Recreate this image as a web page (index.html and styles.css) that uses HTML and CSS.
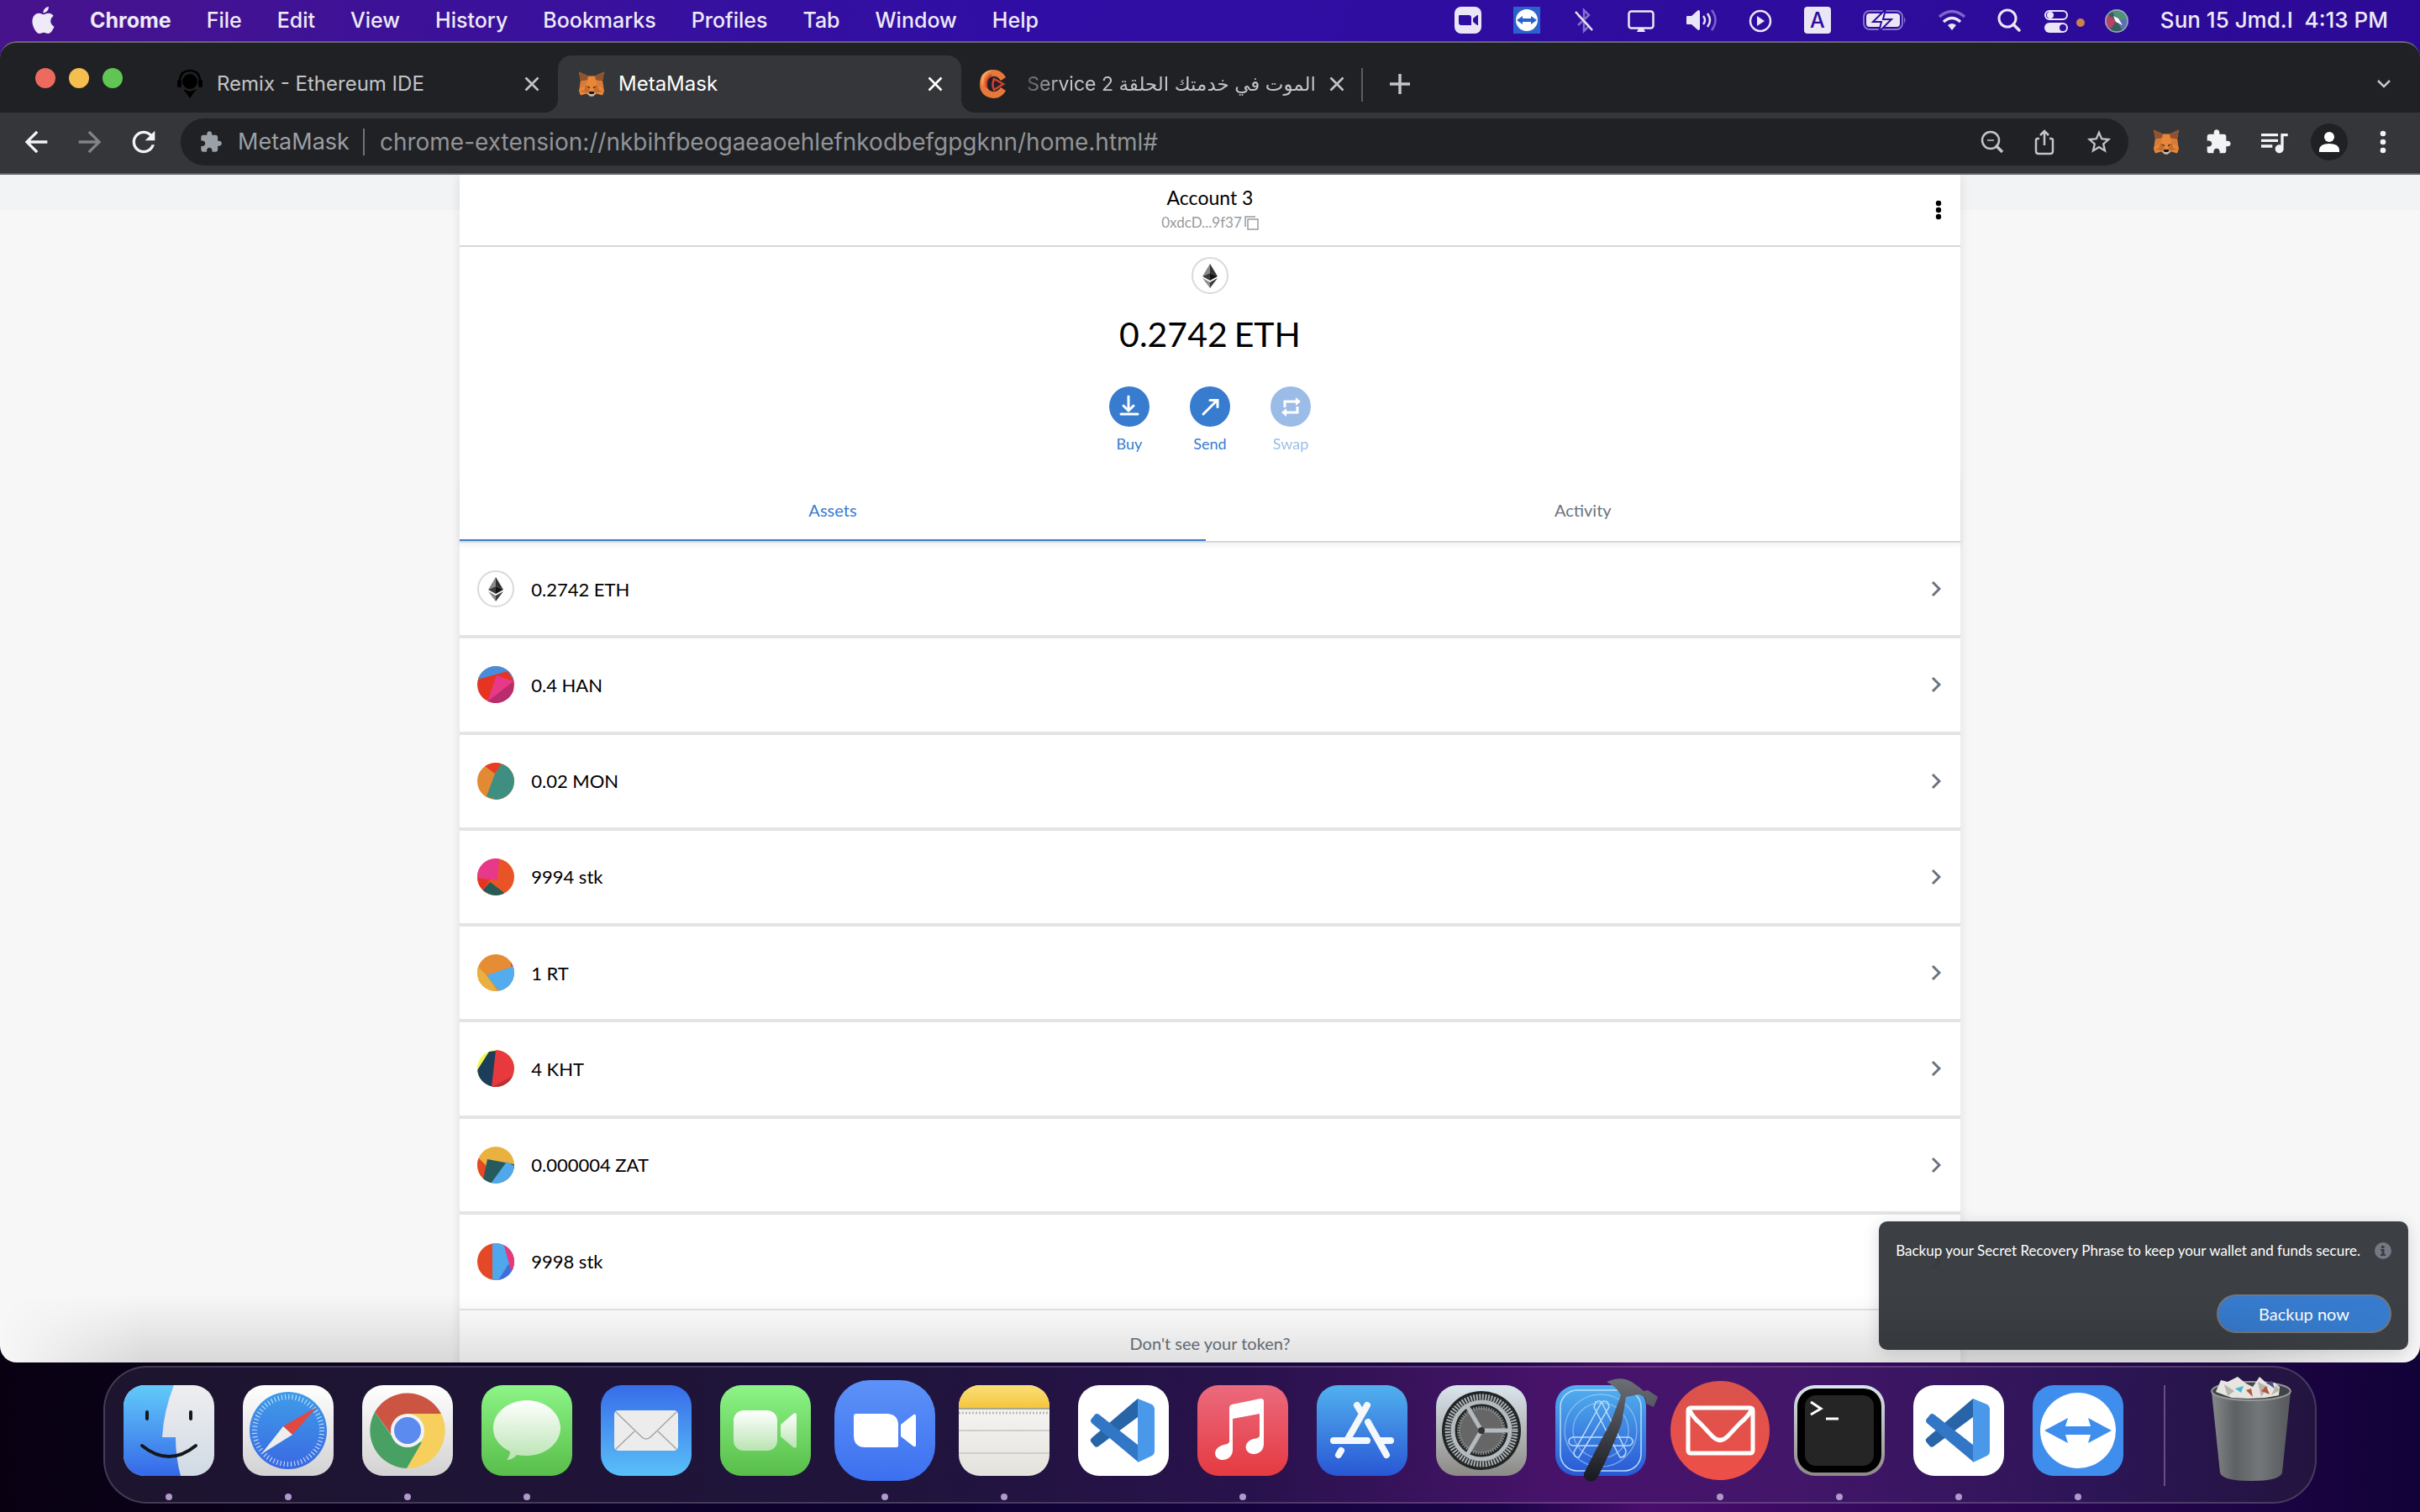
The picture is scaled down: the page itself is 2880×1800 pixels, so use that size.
FILE: index.html
```html
<!DOCTYPE html>
<html lang="en">
<head>
<meta charset="utf-8">
<title>MetaMask</title>
<link rel="stylesheet" href="styles.css">
</head>
<body>
<svg class="defs" aria-hidden="true">
  <defs>
    <symbol id="fox" viewBox="0 0 32 31">
      <path fill="#e8873a" d="M1 1 12 6h8L31 1l-2 11 2 12-2 5-7-2-4 3h-4l-4-3-7 2-2-5 2-12z"/>
      <path fill="#8f5330" d="M1 1 12 6 11 11 3 12zM31 1 20 6l1 5 8 1z"/>
      <path fill="#d97a35" d="M3 12l8-1-2 6-7 4zM29 12l-8-1 2 6 7 4z"/>
      <path fill="#c96d2f" d="M9 17l3 1 2 8-4 0-8-2 5-1zM23 17l-3 1-2 8 4 0 8-2-5-1z"/>
      <path fill="#e8873a" d="M12 13h8l-2 10h-4z"/>
      <path fill="#3a2c26" d="M10 18l4 1v2zM22 18l-4 1v2z"/>
      <path fill="#cdbeb0" d="M11 26l3-1h4l3 1-3 4h-4z"/>
      <path fill="#151515" d="M13.500 24.500h5l1 2-2 1h-3l-2-1z"/>
    </symbol>
    <symbol id="puzzle" viewBox="0 0 24 24"><path fill="currentColor" d="M20.500 11H19V7c0-1.100-.9-2-2-2h-4V3.500C13 2.120 11.880 1 10.500 1S8 2.120 8 3.500V5H4c-1.100 0-1.990.9-1.990 2v3.800H3.500c1.490 0 2.700 1.210 2.700 2.700s-1.210 2.700-2.700 2.700H2V20c0 1.100.9 2 2 2h3.800v-1.500c0-1.490 1.210-2.700 2.700-2.700 1.490 0 2.700 1.210 2.700 2.700V22H17c1.100 0 2-.9 2-2v-4h1.500c1.380 0 2.500-1.120 2.500-2.500S21.880 11 20.500 11z"/></symbol>
    <symbol id="close" viewBox="0 0 18 18"><path d="M1.500 1.500l15 15M16.500 1.500l-15 15" stroke="currentColor" stroke-width="2.600" fill="none"/></symbol>
    <symbol id="chevron" viewBox="0 0 12 20"><path d="M2 2l8 8-8 8" stroke="currentColor" stroke-width="3" fill="none"/></symbol>
    <symbol id="eth" viewBox="0 0 44 44">
      <circle cx="22" cy="22" r="21" fill="#fff" stroke="#d9d9dc" stroke-width="2"/>
      <path fill="#8a8a8a" d="M22 8v11l-9 4z"/><path fill="#343434" d="M22 8l9 15-9-4z"/>
      <path fill="#3c3c3b" d="M13 23l9-4v9z"/><path fill="#141414" d="M31 23l-9-4v9z"/>
      <path fill="#8a8a8a" d="M13 25l9 5v7z"/><path fill="#3c3c3b" d="M31 25l-9 5v7z"/>
    </symbol>
    <symbol id="vscode" viewBox="0 0 108 108">
      <rect width="108" height="108" rx="25" fill="#fff"/>
      <path fill="#2765a8" d="M71 16v22L24 73q-3 2-5-1l-4-5q-1-2 1-4z"/>
      <path fill="#3277c6" d="M16 45q-2-3 0-5l4-5q2-2 5 0l46 36v20z"/>
      <path fill="#4a98ea" d="M71 16l17 7q3 2 3 5v51q0 3-3 5l-17 8z"/>
    </symbol>
    <clipPath id="token"><circle cx="22" cy="22" r="22"/></clipPath>
    <linearGradient id="finderBlue" x2="0" y2="1"><stop stop-color="#62cbfa"/><stop offset="1" stop-color="#3568e8"/></linearGradient>
    <linearGradient id="finderGrey" x2="0" y2="1"><stop stop-color="#efeef0"/><stop offset="1" stop-color="#d0dae4"/></linearGradient>
    <linearGradient id="paper" x2="0" y2="1"><stop stop-color="#fff"/><stop offset="1" stop-color="#d2d2d2"/></linearGradient>
    <linearGradient id="safari" x2="0" y2="1"><stop stop-color="#3f9de9"/><stop offset="1" stop-color="#3a68e2"/></linearGradient>
    <linearGradient id="green" x2="0" y2="1"><stop stop-color="#8cf587"/><stop offset="1" stop-color="#58bd49"/></linearGradient>
    <linearGradient id="bubble" x2="0" y2="1"><stop stop-color="#fff"/><stop offset="1" stop-color="#b9e4b2"/></linearGradient>
    <linearGradient id="mail" x2="0" y2="1"><stop stop-color="#376ce9"/><stop offset="1" stop-color="#5ac0f8"/></linearGradient>
    <linearGradient id="zoomBlue" x2="0" y2="1"><stop stop-color="#5c92f8"/><stop offset="1" stop-color="#3d70f0"/></linearGradient>
    <linearGradient id="noteTop" x2="0" y2="1"><stop stop-color="#fae078"/><stop offset="1" stop-color="#f5c43c"/></linearGradient>
    <linearGradient id="noteBody" x2="0" y2="1"><stop stop-color="#fbfafa"/><stop offset="1" stop-color="#e3e2db"/></linearGradient>
    <linearGradient id="music" x2="0" y2="1"><stop stop-color="#eb6a7e"/><stop offset="1" stop-color="#e53a40"/></linearGradient>
    <linearGradient id="store" x2="0" y2="1"><stop stop-color="#51b1ee"/><stop offset="1" stop-color="#2957d5"/></linearGradient>
    <linearGradient id="gear" x2="0" y2="1"><stop stop-color="#dbe5ed"/><stop offset="1" stop-color="#8c8985"/></linearGradient>
    <linearGradient id="hammer" x2="0" y2="1"><stop stop-color="#6c6f76"/><stop offset="1" stop-color="#17191f"/></linearGradient>
    <linearGradient id="bin"><stop stop-color="#86898a"/><stop offset=".3" stop-color="#5e6163"/><stop offset=".6" stop-color="#73777a"/><stop offset="1" stop-color="#56585b"/></linearGradient>
    <linearGradient id="red" x2="0" y2="1"><stop stop-color="#d9534c"/><stop offset="1" stop-color="#ee4f48"/></linearGradient>
    <clipPath id="tile"><rect width="108" height="108" rx="25"/></clipPath>
    <clipPath id="orb"><circle cx="14" cy="17" r="14"/></clipPath>
  </defs>
</svg>

<header class="menubar">
  <nav class="menus" aria-label="Application menu">
    <button class="menu apple" aria-label="Apple"><svg width="27" height="32" viewBox="2 0 20 24"><path fill="currentColor" d="M12.152 6.896c-.948 0-2.415-1.078-3.960-1.040-2.040.027-3.910 1.183-4.961 3.014-2.117 3.675-.546 9.103 1.519 12.090 1.013 1.454 2.208 3.090 3.792 3.039 1.520-.065 2.090-.987 3.935-.987 1.831 0 2.350.987 3.960.948 1.637-.026 2.676-1.480 3.676-2.948 1.156-1.688 1.636-3.325 1.662-3.415-.039-.013-3.182-1.221-3.220-4.857-.026-3.040 2.480-4.494 2.597-4.559-1.429-2.090-3.623-2.324-4.390-2.376-2-.156-3.675 1.090-4.610 1.090zM15.530 3.830c.843-1.012 1.400-2.427 1.245-3.830-1.207.052-2.662.805-3.532 1.818-.78.896-1.454 2.338-1.273 3.714 1.338.104 2.715-.688 3.559-1.701"/></svg></button>
    <button class="menu app">Chrome</button>
    <button class="menu">File</button>
    <button class="menu">Edit</button>
    <button class="menu">View</button>
    <button class="menu">History</button>
    <button class="menu">Bookmarks</button>
    <button class="menu">Profiles</button>
    <button class="menu">Tab</button>
    <button class="menu">Window</button>
    <button class="menu">Help</button>
  </nav>
  <div class="status">
    <svg width="32" height="32" viewBox="0 0 32 32"><rect width="32" height="32" rx="8" fill="#eae6f5"/><path fill="#2f0ca2" d="M5 11q0-1 1-1h11q3 0 3 3v9H8q-3 0-3-3zM22 14l5-4h1v12h-1l-5-4z"/></svg>
    <svg width="32" height="32" viewBox="0 0 32 32"><rect width="32" height="32" fill="#2c62cf"/><circle cx="16" cy="16" r="13" fill="#fff"/><path fill="#2c62cf" d="M4 16l7-5v3h10v-3l7 5-7 5v-3H11v3z"/></svg>
    <svg width="28" height="32" viewBox="0 0 28 32"><path d="M7 22l13-12-6-6v25l6-6L7 10" fill="none" stroke="#8370cc" stroke-width="2.500"/><path d="M4 6l20 22" stroke="#eae6f5" stroke-width="2.500"/></svg>
    <svg width="32" height="32" viewBox="0 0 32 32"><rect x="1.500" y="5.500" width="29" height="20" rx="3" fill="none" stroke="#eae6f5" stroke-width="2.500"/><path fill="#eae6f5" d="M13 26h6l2 4H11z"/></svg>
    <svg width="36" height="32" viewBox="0 0 36 32"><path fill="#eae6f5" d="M0 12q0-1 1-1h5l8-7q2 0 2 2v20q0 2-2 2l-8-7H1q-1 0-1-1z"/><g fill="none" stroke-width="2.500"><path stroke="#eae6f5" d="M20 11q4 5 0 10M25 8q6 8 0 16"/><path stroke="#7a66c8" d="M30 4q9 12 0 24"/></g></svg>
    <svg width="28" height="32" viewBox="0 0 28 32"><circle cx="14" cy="17" r="12" fill="none" stroke="#eae6f5" stroke-width="2.500"/><path fill="#eae6f5" d="M10 11l9 6-9 6z"/></svg>
    <span class="input-source">A</span>
    <svg width="52" height="32" viewBox="0 0 52 32"><rect x="1" y="5" width="46" height="22" rx="7" fill="none" stroke="#8370cc" stroke-width="2"/><rect x="4" y="8" width="40" height="16" rx="4" fill="#eae6f5"/><path fill="#8370cc" d="M49 12q3 4 0 8z"/><path fill="#eae6f5" stroke="#2f0ca2" stroke-width="2" d="M27 3L12 18h10l-3 12 15-15H24z"/></svg>
    <svg width="32" height="32" viewBox="0 0 32 32"><g fill="none" stroke-width="3.500"><path stroke="#7a66c8" d="M1 12q15-13 30 0"/><path stroke="#eae6f5" d="M6 18q10-9 20 0"/></g><path fill="#eae6f5" d="M11 22q5-4 10 0l-5 6z"/></svg>
    <svg width="28" height="32" viewBox="0 0 28 32"><circle cx="12" cy="14" r="10" fill="none" stroke="#eae6f5" stroke-width="3"/><path d="M19 21l7 7" stroke="#eae6f5" stroke-width="3.500" stroke-linecap="round"/></svg>
    <svg class="toggles" width="48" height="32" viewBox="0 0 48 32"><rect x="1" y="5" width="26" height="10" rx="5" fill="none" stroke="#eae6f5" stroke-width="2"/><circle cx="7" cy="10" r="4" fill="#eae6f5"/><rect y="19" width="28" height="12" rx="6" fill="#eae6f5"/><circle cx="22" cy="25" r="4" fill="#2f0ca2"/><circle cx="43" cy="19" r="5" fill="#c98447"/></svg>
    <svg width="28" height="32" viewBox="0 0 28 32"><g clip-path="url(#orb)"><path fill="#35605f" d="M0 3h28v28H0z"/><path fill="#4f8f7b" d="M8 3h20v12L14 17z"/><path fill="#b7436a" d="M0 8l14 8-7 10-7-4z"/><path fill="#5b6fb5" d="M14 17l14-3v8l-8 5z"/></g><circle cx="14" cy="17" r="13" fill="none" stroke="#9aa8b8" stroke-width="1.500"/><path fill="#fff" d="M10 11l6 3 5 8-8-4z"/></svg>
    <time class="clock">Sun 15 Jmd.I  4:13 PM</time>
  </div>
</header>

<main class="window">
  <div class="tabstrip">
    <div class="lights"><i class="light red"></i><i class="light amber"></i><i class="light green"></i></div>
    <div class="tab first">
      <svg width="32" height="36" viewBox="0 0 32 36"><path fill="none" stroke="#000" stroke-width="2.500" d="M4 18V12q2-10 12-10t12 10v6"/><circle cx="16" cy="15" r="9"/><rect x="1" y="13" width="5" height="9" rx="2"/><rect x="26" y="13" width="5" height="9" rx="2"/><path d="M8 24l8 3 8-3-8 11z"/></svg>
      <span class="title">Remix - Ethereum IDE</span>
      <button class="close" aria-label="Close tab"><svg width="18" height="18"><use href="#close"/></svg></button>
    </div>
    <div class="tab active">
      <svg width="32" height="32"><use href="#fox"/></svg>
      <span class="title">MetaMask</span>
      <button class="close" aria-label="Close tab"><svg width="18" height="18"><use href="#close"/></svg></button>
    </div>
    <div class="tab last">
      <svg width="32" height="34" viewBox="0 0 32 34"><path fill="#e8773a" d="M31 9Q26 0 16 0 0 2 0 17t16 17q10 0 15-9l-6-4q-4 6-10 5-7-2-7-9t7-9q6-1 10 5z"/><path fill="#f2a55c" d="M16 0Q3 5 4 20 0 13 3 6 8 0 16 0z"/><path fill="none" stroke="#d83f32" stroke-width="2.500" d="M17 11l11 6-11 7q-3-6 0-13zM14 6q-8 5-6 15"/></svg>
      <span class="title fade" dir="rtl" lang="ar">الموت في خدمتك الحلقة 2 Service</span>
      <button class="close" aria-label="Close tab"><svg width="18" height="18"><use href="#close"/></svg></button>
    </div>
    <button class="newtab" aria-label="New tab"><svg width="24" height="24" viewBox="0 0 24 24"><path d="M12 0v24M0 12h24" stroke="currentColor" stroke-width="3.500"/></svg></button>
    <button class="tabsearch" aria-label="Search tabs"><svg width="18" height="12" viewBox="0 0 18 12"><path d="M2 2l7 7 7-7" fill="none" stroke="currentColor" stroke-width="2.500"/></svg></button>
  </div>

  <div class="toolbar">
    <button class="tool" aria-label="Back"><svg width="40" height="40" viewBox="0 0 24 24"><path fill="currentColor" d="M20 11H7.830l5.590-5.590L12 4l-8 8 8 8 1.410-1.410L7.830 13H20v-2z"/></svg></button>
    <button class="tool dim" aria-label="Forward"><svg width="40" height="40" viewBox="0 0 24 24"><path fill="currentColor" d="M4 11h12.170l-5.590-5.590L12 4l8 8-8 8-1.410-1.410L16.170 13H4z"/></svg></button>
    <button class="tool" aria-label="Reload"><svg width="40" height="40" viewBox="0 0 24 24"><path fill="currentColor" d="M17.650 6.350C16.200 4.900 14.210 4 12 4c-4.420 0-7.990 3.580-7.990 8s3.570 8 7.990 8c3.730 0 6.840-2.550 7.730-6h-2.080c-.82 2.330-3.040 4-5.650 4-3.310 0-6-2.690-6-6s2.690-6 6-6c1.660 0 3.140.69 4.220 1.780L13 11h7V4l-2.350 2.350z"/></svg></button>
    <div class="omnibox">
      <svg class="ext" width="28" height="28"><use href="#puzzle"/></svg>
      <label class="origin" for="url">MetaMask</label>
      <input class="url" id="url" type="text" value="chrome-extension://nkbihfbeogaeaoehlefnkodbefgpgknn/home.html#">
      <button class="act" aria-label="Zoom"><svg width="28" height="28" viewBox="0 0 28 28"><g fill="none" stroke="currentColor"><circle cx="12" cy="12" r="10" stroke-width="2.500"/><path stroke-width="1.500" d="M8 12h8"/><path stroke-width="3.500" d="M18 18l8 8"/></g></svg></button>
      <button class="act" aria-label="Share"><svg width="28" height="32" viewBox="0 0 28 32"><path fill="none" stroke="currentColor" stroke-width="2.500" d="M8 12H6q-2 0-2 2v13q0 3 3 3h14q3 0 3-3V14q0-2-2-2h-2M14 20V4M9 8l5-5 5 5"/></svg></button>
      <button class="act" aria-label="Bookmark"><svg width="34" height="34" viewBox="0 0 24 24"><path fill="currentColor" d="M22 9.240l-7.190-.62L12 2 9.190 8.630 2 9.240l5.460 4.730L5.820 21 12 17.270 18.180 21l-1.630-7.030L22 9.240zM12 15.400l-3.760 2.270 1-4.280-3.320-2.880 4.380-.38L12 6.100l1.710 4.040 4.380.38-3.320 2.880 1 4.280L12 15.400z"/></svg></button>
    </div>
    <div class="extensions">
      <button class="tool" aria-label="MetaMask"><svg width="32" height="32"><use href="#fox"/></svg></button>
      <button class="tool" aria-label="Extensions"><svg width="32" height="32"><use href="#puzzle"/></svg></button>
      <button class="tool" aria-label="Media"><svg width="40" height="40" viewBox="0 0 24 24"><path fill="currentColor" d="M15 6H3v2h12V6zm0 4H3v2h12v-2zM3 16h8v-2H3v2zM17 6v8.180c-.31-.11-.65-.18-1-.18-1.660 0-3 1.340-3 3s1.340 3 3 3 3-1.340 3-3V8h3V6h-5z"/></svg></button>
      <button class="tool profile" aria-label="Profile"><svg width="44" height="44" viewBox="0 0 44 44"><circle cx="22" cy="22" r="22" fill="#202124"/><circle cx="22" cy="16" r="6" fill="#fff"/><path fill="#fff" d="M10 34v-3q1-7 12-7t12 7v3z"/></svg></button>
      <button class="tool overflow" aria-label="Menu"><svg width="8" height="28" viewBox="0 0 8 28"><g fill="currentColor"><circle cx="4" cy="4" r="3.300"/><circle cx="4" cy="14" r="3.300"/><circle cx="4" cy="24" r="3.300"/></g></svg></button>
    </div>
  </div>

  <div class="page">
    <section class="wallet">
      <header class="account">
        <div class="who">
          <h1 class="name">Account 3</h1>
          <button class="address">0xdcD...9f37<svg width="17" height="17" viewBox="0 0 17 17"><path fill="none" stroke="currentColor" stroke-width="1.500" d="M1 13V1h12M4 4h12v12H4z"/></svg></button>
        </div>
        <button class="more" aria-label="Account options"><svg width="8" height="24" viewBox="0 0 8 24"><circle cx="4" cy="4" r="3.200"/><circle cx="4" cy="12" r="3.200"/><circle cx="4" cy="20" r="3.200"/></svg></button>
      </header>

      <div class="overview">
        <svg width="44" height="44"><use href="#eth"/></svg>
        <div class="balance"><span>0.2742</span><span>ETH</span></div>
        <div class="actions">
          <button class="action"><svg width="48" height="48" viewBox="0 0 48 48"><circle cx="24" cy="24" r="24" fill="#377ccf"/><path fill="none" stroke="#fff" stroke-width="3" stroke-linecap="round" stroke-linejoin="round" d="M23 12v16M17 23l6 6 6-6M14 33h20"/></svg>Buy</button>
          <button class="action"><svg width="48" height="48" viewBox="0 0 48 48"><circle cx="24" cy="24" r="24" fill="#377ccf"/><path fill="none" stroke="#fff" stroke-width="3" stroke-linecap="round" d="M16 33l16-16M24 16.500h9v8"/></svg>Send</button>
          <button class="action" disabled><svg width="48" height="48" viewBox="0 0 48 48"><circle cx="24" cy="24" r="24" fill="#377ccf"/><path fill="none" stroke="#fff" stroke-width="3" d="M17 25v-7h14M32 24v7H18"/><path fill="#fff" d="M30 13l6 5-6 5zM19 26l-6 5 6 5z"/></svg>Swap</button>
        </div>
      </div>

      <nav class="sections">
        <button class="section current">Assets</button>
        <button class="section">Activity</button>
      </nav>

      <ul class="assets">
        <li class="asset"><a class="row" href="#eth-asset"><svg width="44" height="44"><use href="#eth"/></svg><span class="amount">0.2742 ETH</span><svg class="go" width="12" height="20"><use href="#chevron"/></svg></a></li>
        <li class="asset"><a class="row" href="#han"><svg width="44" height="44" viewBox="0 0 44 44"><g clip-path="url(#token)"><path fill="#e53522" d="M0 0h44v44H0z"/><path fill="#478dde" d="M0 16L36 6l8 12V0H0z"/><path fill="#b82d6e" d="M12 42l31-24v26H12z"/><path fill="#e83889" d="M23 11l20 7-31 24z"/></g></svg><span class="amount">0.4 HAN</span><svg class="go" width="12" height="20"><use href="#chevron"/></svg></a></li>
        <li class="asset"><a class="row" href="#mon"><svg width="44" height="44" viewBox="0 0 44 44"><g clip-path="url(#token)"><path fill="#e28a33" d="M0 0h44v44H0z"/><path fill="#e53e22" d="M9 4l12 9L30 0H9z"/><path fill="#3f8e82" d="M21 13L30 0h14v44H22L11 40z"/></g></svg><span class="amount">0.02 MON</span><svg class="go" width="12" height="20"><use href="#chevron"/></svg></a></li>
        <li class="asset"><a class="row" href="#stk"><svg width="44" height="44" viewBox="0 0 44 44"><g clip-path="url(#token)"><path fill="#e95427" d="M0 0h44v44H0z"/><path fill="#e83889" d="M0 0h26l-2 26-24-3z"/><path fill="#e53522" d="M0 23l15 2-8 13H0z"/><path fill="#265b56" d="M15 28L5 40v4h29l-3-4z"/></g></svg><span class="amount">9994 stk</span><svg class="go" width="12" height="20"><use href="#chevron"/></svg></a></li>
        <li class="asset"><a class="row" href="#rt"><svg width="44" height="44" viewBox="0 0 44 44"><g clip-path="url(#token)"><path fill="#e58c34" d="M0 0h44v44H0z"/><path fill="#eaaf3e" d="M0 14l12 12 12 18H0z"/><path fill="#52acee" d="M11 25l33-11v30H26z"/><path fill="#e83889" d="M40 8h4v6l-4 1z"/></g></svg><span class="amount">1 RT</span><svg class="go" width="12" height="20"><use href="#chevron"/></svg></a></li>
        <li class="asset"><a class="row" href="#kht"><svg width="44" height="44" viewBox="0 0 44 44"><g clip-path="url(#token)"><path fill="#f4f653" d="M0 0h44v44H0z"/><path fill="#1b3e5a" d="M0 24L14 2l8-1v43H0z"/><path fill="#e7393e" d="M22 0h22v44H17z"/><path fill="#b83038" d="M18 44l26-14v14z"/></g></svg><span class="amount">4 KHT</span><svg class="go" width="12" height="20"><use href="#chevron"/></svg></a></li>
        <li class="asset"><a class="row" href="#zat"><svg width="44" height="44" viewBox="0 0 44 44"><g clip-path="url(#token)"><path fill="#ebb13f" d="M0 0h44v44H0z"/><path fill="#e54825" d="M0 12l10 10v22H0z"/><path fill="#275a5c" d="M12 15l32 6v5L16 44H6z"/><path fill="#50a8ea" d="M35 18l9 5v21H16z"/></g></svg><span class="amount">0.000004 ZAT</span><svg class="go" width="12" height="20"><use href="#chevron"/></svg></a></li>
        <li class="asset"><a class="row" href="#stk-2"><svg width="44" height="44" viewBox="0 0 44 44"><g clip-path="url(#token)"><path fill="#e54827" d="M0 0h44v44H0z"/><path fill="#4fa7ec" d="M18 0h26v44H18z"/><path fill="#3d6edb" d="M25 44l12-19 7 6v13z"/><path fill="#e7397a" d="M31 0h13v32h-4z"/></g></svg><span class="amount">9998 stk</span><svg class="go" width="12" height="20"><use href="#chevron"/></svg></a></li>
      </ul>
      <p class="missing">Don't see your token?</p>
    </section>

    <aside class="toast">
      <div class="message"><span>Backup your Secret Recovery Phrase to keep your wallet and funds secure.</span><svg width="20" height="20" viewBox="0 0 20 20"><circle cx="10" cy="10" r="10" fill="#737883"/><path fill="#3a3d42" d="M8 4h3.500v3H8zM7 8h4.500v6H13v2H7v-2h1.500v-4H7z"/></svg></div>
      <button class="backup">Backup now</button>
    </aside>
  </div>
</main>

<footer class="dock">
  <button class="launcher running" aria-label="Finder"><svg viewBox="0 0 108 108"><g clip-path="url(#tile)"><path fill="url(#finderGrey)" d="M0 0h108v108H0z"/><path fill="url(#finderBlue)" d="M0 0h60Q48 30 46 62h16q0 24 6 46H0z"/></g><g fill="none" stroke="#15171c" stroke-width="4" stroke-linecap="round"><path d="M28 32v8M80 32v8M22 72q32 26 64 0"/></g></svg></button>
  <button class="launcher running" aria-label="Safari"><svg viewBox="0 0 108 108"><rect width="108" height="108" rx="25" fill="url(#paper)"/><circle cx="54" cy="54" r="46" fill="url(#safari)"/><circle cx="54" cy="54" r="40" fill="none" stroke="#d5e7fa" stroke-width="6" stroke-dasharray="1 3.190"/><path fill="#e2483d" d="M88 26L48 49l11 10z"/><path fill="#eee" d="M22 82l26-33 11 10z"/></svg></button>
  <button class="launcher running" aria-label="Chrome"><svg viewBox="0 0 108 108"><rect width="108" height="108" rx="25" fill="url(#paper)"/><path fill="#f6cf5c" d="M54 34h40A45 45 0 0 1 53 99L74 60z"/><path fill="#cc5443" d="M15 32A45 45 0 0 1 94 34H54L34 58z"/><path fill="#49a063" d="M15 32A45 45 0 0 0 53 99l18-31-36-8z"/><circle cx="54" cy="54" r="20" fill="#f3f3f3"/><circle cx="54" cy="54" r="16" fill="#5b8bef"/></svg></button>
  <button class="launcher running" aria-label="Messages"><svg viewBox="0 0 108 108"><rect width="108" height="108" rx="25" fill="url(#green)"/><path fill="url(#bubble)" d="M54 18c22 0 40 15 40 33S76 84 54 84q-7 0-12-1-5 6-12 6 4-5 4-10Q14 69 14 51c0-18 18-33 40-33z"/></svg></button>
  <button class="launcher" aria-label="Mail"><svg viewBox="0 0 108 108"><rect width="108" height="108" rx="25" fill="url(#mail)"/><rect x="16" y="30" width="76" height="48" rx="5" fill="#ececec"/><path fill="none" stroke="#a5a5a5" stroke-width="1.500" d="M18 76l22-21M90 76L68 55M18 32l30 29q6 6 12 0l30-29"/></svg></button>
  <button class="launcher" aria-label="FaceTime"><svg viewBox="0 0 108 108"><rect width="108" height="108" rx="25" fill="url(#green)"/><rect x="16" y="30" width="52" height="48" rx="12" fill="url(#bubble)"/><path fill="url(#bubble)" d="M72 47l15-13q4-2 4 2v36q0 4-4 2L72 61z"/></svg></button>
  <button class="launcher running" aria-label="Zoom"><svg viewBox="0 0 108 108"><rect x="-6" y="-6" width="120" height="120" rx="42" fill="url(#zoomBlue)"/><path fill="#fff" d="M17 37q0-3 3-3h36q14 0 14 14v24q0 2-2 2H31q-14 0-14-14zM73 47l14-11q4-3 4 1v34q0 4-4 1L73 61z"/></svg></button>
  <button class="launcher running" aria-label="Notes"><svg viewBox="0 0 108 108"><g clip-path="url(#tile)"><path fill="url(#noteBody)" d="M0 0h108v108H0z"/><path fill="url(#noteTop)" d="M0 0h108v28H0z"/><path fill="#aaa68f" d="M0 27h108v2H0z"/><path stroke="#cfcdd0" stroke-width="2" d="M0 54h108M0 81h108"/><path stroke="#bbb" stroke-width="3" stroke-dasharray="2 2" d="M0 33h108"/></g></svg></button>
  <button class="launcher" aria-label="Visual Studio Code"><svg viewBox="0 0 108 108"><use href="#vscode"/></svg></button>
  <button class="launcher running" aria-label="Music"><svg viewBox="0 0 108 108"><rect width="108" height="108" rx="25" fill="url(#music)"/><path fill="#fff" d="M38 27q0-3 3-4l34-7q4 0 4 3v51c0 8-6 12-12 12-9 0-13-10-5-16 5-3 12-2 12-6V34l-32 6v37c0 8-6 12-12 12-9 0-12-10-5-15 5-4 13-3 13-7z"/></svg></button>
  <button class="launcher" aria-label="App Store"><svg viewBox="0 0 108 108"><rect width="108" height="108" rx="25" fill="url(#store)"/><g stroke="#f4f8fc" stroke-width="8" stroke-linecap="round"><path d="M60 24L37 64M48 24l6 10M61 44l22 39M20 66h40M76 66h12M29 78l-3 5"/></g></svg></button>
  <button class="launcher" aria-label="System Preferences"><svg viewBox="0 0 108 108"><rect width="108" height="108" rx="25" fill="url(#gear)"/><circle cx="54" cy="54" r="47" fill="#222526"/><circle cx="54" cy="54" r="40" fill="none" stroke="#aab0b3" stroke-width="7" stroke-dasharray="2 1.500"/><circle cx="54" cy="54" r="27" fill="#666" stroke="#8b9092" stroke-width="4" stroke-dasharray="1.500 1.500"/><g fill="none" stroke="#b4babd" stroke-width="5"><circle cx="54" cy="54" r="34"/><path d="M54 54h34M54 54L37 25M54 54L37 83"/></g><circle cx="54" cy="54" r="4" fill="#333"/></svg></button>
  <button class="launcher" aria-label="Xcode"><svg viewBox="0 0 108 108"><rect width="108" height="108" rx="25" fill="url(#store)"/><g fill="none" stroke="#b9dcfa" stroke-width="1.500"><rect x="6" y="6" width="96" height="96" rx="20"/><circle cx="54" cy="54" r="43" opacity=".5"/><circle cx="54" cy="54" r="33" opacity=".5"/><path d="M48 20q6-3 8 2l28 56q0 8-7 8L46 26zM62 20q-6-3-8 2L22 80q0 6 6 6l36-60z"/><rect x="16" y="62" width="76" height="10" rx="5"/></g><path fill="url(#hammer)" d="M84 14L79 45Q66 80 50 110q-4 6-11 4-6-3-5-9 16-32 32-61L78 12q-5-10-17-16 20-9 34 3 6 4 10 8l5-1 12 8-5 12-9-4-1-7-7-4z"/></svg></button>
  <button class="launcher running" aria-label="Inbox"><svg viewBox="0 0 108 108"><circle cx="54" cy="54" r="59" fill="url(#red)"/><g fill="none" stroke="#fff" stroke-width="5"><rect x="16" y="27" width="77" height="54" rx="3"/><path d="M17 28q4 10 14 18l14 15q9 9 18 0l14-15q12-10 15-18"/></g></svg></button>
  <button class="launcher running" aria-label="Terminal"><svg viewBox="0 0 108 108"><rect width="108" height="108" rx="25" fill="url(#gear)"/><rect x="4" y="4" width="100" height="100" rx="21" fill="#000"/><rect x="13" y="12" width="82" height="84" rx="13" fill="#252525"/><path fill="none" stroke="#fff" stroke-width="3" d="M20 20l12 8-12 7M38 40h15"/></svg></button>
  <button class="launcher running" aria-label="Visual Studio Code"><svg viewBox="0 0 108 108"><use href="#vscode"/></svg></button>
  <button class="launcher running" aria-label="TeamViewer"><svg viewBox="0 0 108 108"><rect width="108" height="108" rx="25" fill="#3f8eee"/><circle cx="54" cy="54" r="45" fill="#fff"/><path fill="#3f8eee" d="M14 54l28-15-3 10h30l-3-10 28 15-28 15 3-10H39l3 10z"/></svg></button>
  <span class="divider"></span>
  <button class="launcher" aria-label="Trash"><svg viewBox="0 0 108 108"><path fill="url(#bin)" d="M7 8h94L91 104q-2 10-37 10t-37-10z"/><ellipse cx="54" cy="7" rx="47" ry="11" fill="#404346" stroke="#96999b" stroke-width="2"/><path fill="#e6e5e2" d="M12 8l6-14 8 2 12-6 10 8 8 4 8-12 10 9 8-2 6 5-1 10-16 3-20 1-20-1z"/><path fill="#b9b3ac" d="M22-1l12 8-8 6zM62-4l4 18 8-12zM84 0l-6 12 10-6z"/><path fill="#46b9cc" d="M35 4l10-3-3 8z"/><path fill="#b4543b" d="M48 6l6-2 2 10zM66 7l6-6 4 10z"/><path fill="#474f86" d="M72-3l7-2 3 9z"/></svg></button>
</footer>
</body>
</html>
```
FILE: styles.css
```css
* { box-sizing: border-box; }

body {
  margin: 0;
  height: 100vh;
  display: flex;
  flex-direction: column;
  overflow: hidden;
  font-family: Inter, "Liberation Sans", "DejaVu Sans", sans-serif;
  background:
    linear-gradient(90deg, #47138c, #3a119b 21%, #300ea5 42%, #2c0a96) top / 100% 80px no-repeat,
    linear-gradient(90deg, #090112, #0f0233 40%, #1b0448 62%, #4a0d6c 68%, #33085c 78%, #120238);
}

button {
  margin: 0;
  padding: 0;
  border: 0;
  background: none;
  color: inherit;
  font: inherit;
  display: flex;
  align-items: center;
  justify-content: center;
}

svg { display: block; flex: none; overflow: visible; }

.defs { position: absolute; width: 0; height: 0; }

/* System menu bar */
.menubar {
  height: 49px;
  flex: none;
  display: flex;
  align-items: center;
  justify-content: space-between;
  padding: 0 38px 2px;
  color: #eeeaf7;
  font-size: 25px;
  font-weight: 500;
}

.menus { display: flex; gap: 42px; }
.app { font-weight: 700; }
.status { display: flex; align-items: center; gap: 38px; }

.input-source {
  width: 32px;
  height: 32px;
  border-radius: 4px;
  background: #eae6f5;
  color: #2f0ca2;
  text-align: center;
  line-height: 32px;
}

.toggles { margin-left: -10px; margin-right: -14px; }
.clock { white-space: pre; font-size: 26px; }

/* Browser window */
.window {
  flex: 1;
  min-height: 0;
  display: flex;
  flex-direction: column;
  position: relative;
  overflow: hidden;
  border-top: 2px solid #66686b;
  border-radius: 20px;
  background: #202124;
}

/* Shade that the dock casts on the foot of the window */
.window::after {
  content: "";
  position: absolute;
  left: 0;
  right: 0;
  bottom: 0;
  height: 80px;
  background: linear-gradient(transparent, rgba(0, 0, 0, .12));
  mask-image: linear-gradient(90deg, transparent, #000 6%, #000 92%, transparent);
  pointer-events: none;
}

.tabstrip {
  height: 83px;
  flex: none;
  display: flex;
  align-items: flex-end;
  padding: 0 34px 0 42px;
  color: #c2c4c7;
  font-size: 24px;
}

.lights { display: flex; gap: 16px; align-self: center; margin-right: 40px; }
.light { width: 24px; height: 24px; border-radius: 50%; }
.light.red { background: #ed6a5e; }
.light.amber { background: #f5bf4f; }
.light.green { background: #61c554; }

.tab {
  width: 480px;
  height: 68px;
  flex: none;
  display: flex;
  align-items: center;
  gap: 16px;
  padding: 0 22px 0 24px;
  position: relative;
}

.tab.first { width: 478px; }
.tab .title { flex: 1; min-width: 0; white-space: nowrap; overflow: hidden; line-height: 40px; }
.tab.active { background: #35363a; color: #fff; border-radius: 16px 16px 0 0; }

/* Flared feet of the selected tab */
.tab.active::before,
.tab.active::after {
  content: "";
  position: absolute;
  bottom: 0;
  width: 16px;
  height: 16px;
}
.tab.active::before { right: 100%; background: radial-gradient(circle at 0 0, transparent 16px, #35363a 16px); }
.tab.active::after { left: 100%; background: radial-gradient(circle at 100% 0, transparent 16px, #35363a 16px); }

.tab.last { width: 478px; padding: 0 22px; }
.tab.last::after {
  content: "";
  position: absolute;
  right: 0;
  top: 15px;
  width: 2px;
  height: 40px;
  background: #5b5d61;
}
.tab .fade { font-size: 23px; mask-image: linear-gradient(90deg, rgba(0, 0, 0, .2), #000 48px); }

.newtab { height: 68px; margin-left: 32px; }
.tabsearch { height: 68px; margin-left: auto; }

.toolbar {
  height: 74px;
  flex: none;
  display: flex;
  align-items: center;
  padding: 0 40px 2px 23px;
  gap: 24px;
  background: #35363a;
  border-bottom: 2px solid #5f6064;
  color: #f1f3f4;
}

.dim { color: #828387; }

.omnibox {
  flex: 1;
  height: 56px;
  display: flex;
  align-items: center;
  padding: 0 18px 0 22px;
  border-radius: 28px;
  background: #202124;
  color: #9aa0a6;
  font-size: 27px;
}

.origin { margin-left: 18px; padding-right: 16px; border-right: 2px solid #6f7276; line-height: 32px; }
.url {
  flex: 1;
  min-width: 0;
  margin-left: 18px;
  padding: 0;
  border: 0;
  outline: 0;
  background: none;
  color: #919498;
  font: inherit;
  font-size: 28px;
}
.act { color: #c2c4c7; margin-left: 34px; }
.extensions { display: flex; align-items: center; gap: 30px; margin-left: 5px; }
.extensions .profile { margin-left: -6px; }
.extensions .overflow { margin-left: 8px; }

/* Wallet page */
.page {
  flex: 1;
  min-height: 0;
  position: relative;
  overflow: hidden;
  background: linear-gradient(#f2f3f4 42px, #f7f7f7 42px);
  color: #000;
  font-family: Lato, "Liberation Sans", sans-serif;
}

.wallet {
  width: 62%;
  margin: 0 auto;
  background: #fff;
  box-shadow: 0 0 12px rgba(0, 0, 0, .1);
}

.account {
  display: grid;
  grid-template-columns: 1fr auto 1fr;
  align-items: center;
  padding: 12px 22px;
  border-bottom: 2px solid #d6d6de;
}

.who { grid-column: 2; display: flex; flex-direction: column; align-items: center; }
.name { margin: 0; font-size: 23px; font-weight: 400; line-height: 30px; }
.address { gap: 3px; color: #989a9e; font-size: 17px; line-height: 30px; }
.more { justify-self: end; }

.overview { display: flex; flex-direction: column; align-items: center; padding: 12px 0 27px; }
.balance { display: flex; gap: 8px; margin: 20px 0 34px; font-size: 41px; line-height: 56px; }
.actions { display: flex; }
.action {
  width: 96px;
  flex-direction: column;
  gap: 8px;
  color: #377ccf;
  font-size: 18px;
  line-height: 24px;
}
.action:disabled { opacity: .5; }

.sections { display: flex; border-bottom: 2px solid #d6d9dc; box-shadow: 0 3px 6px rgba(0, 0, 0, .06); }
.section {
  flex: 1 1 auto;
  padding: 27px 0 22px;
  border-bottom: 2px solid transparent;
  color: #6a737d;
  font-size: 20px;
  line-height: 26px;
}
.current { color: #377ccf; border-color: #377ccf; }

.assets {
  display: grid;
  grid-auto-rows: 1fr;
  min-height: 914px;
  margin: 0;
  padding: 0;
  list-style: none;
}
.asset { display: flex; border-bottom: 4px solid #e4e4e4; }
.asset:last-child { border-bottom-width: 2px; }
.row {
  flex: 1;
  display: flex;
  align-items: center;
  gap: 20px;
  padding: 0 23px 0 21px;
  color: inherit;
  font-size: 22px;
  text-decoration: none;
}
.amount { flex: 1; }
.go { color: #6a737d; }

.missing { margin: 0; padding: 26px 0; color: #6a737d; font-size: 20px; line-height: 26px; text-align: center; }

.toast {
  position: absolute;
  right: 14px;
  bottom: 15px;
  display: flex;
  flex-direction: column;
  gap: 39px;
  padding: 22px 20px 20px;
  border-radius: 10px;
  background: rgba(54, 57, 62, .97);
  box-shadow: 0 4px 20px rgba(0, 0, 0, .15);
  color: #fff;
}
.message { display: flex; align-items: center; gap: 17px; font-size: 17px; line-height: 26px; }
.backup {
  align-self: flex-end;
  width: 208px;
  height: 46px;
  border: 2px solid #74777c;
  border-radius: 23px;
  background: #377ccf;
  font-size: 20px;
}

/* Dock */
.dock {
  flex: none;
  align-self: center;
  display: flex;
  gap: 34px;
  margin: 4px 0 10px;
  padding: 21px 22px 2px;
  border: 2px solid rgba(255, 255, 255, .17);
  border-radius: 52px;
  background: linear-gradient(90deg, #1d142f, #20143c 36%, #28124c 52%, #48136b 66%, #43166a 76%, #2d1556 90%, #22143f);
}
.launcher { flex-direction: column; gap: 21px; justify-content: flex-start; }
.launcher svg { width: 108px; height: 108px; }
.launcher::after { content: ""; width: 8px; height: 8px; border-radius: 50%; }
.running::after { background: #b09acb; }
.divider { width: 2px; height: 120px; margin: 0 14px; background: #6a4c88; }
```
